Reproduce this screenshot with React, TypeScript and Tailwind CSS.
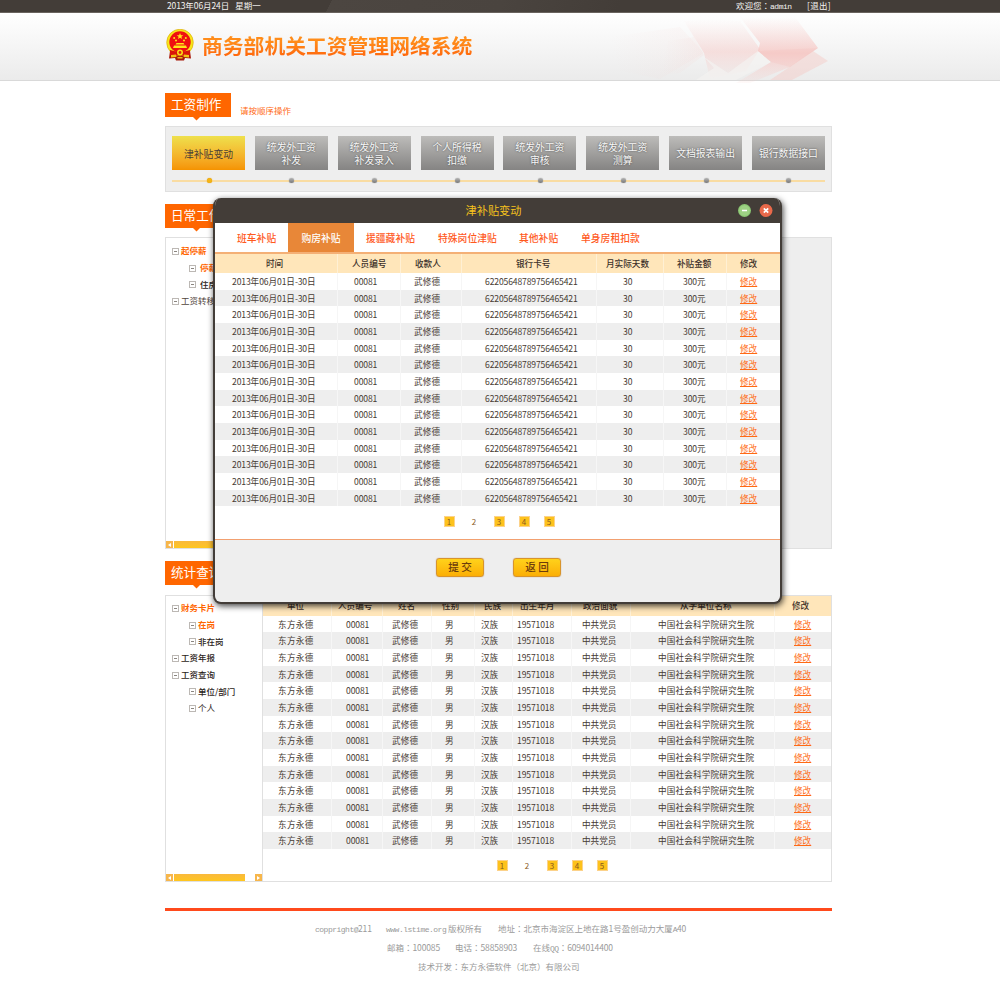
import React from "react";

/* Mixed text: letters get a narrow monospaced face, digits are tightened,
   and the full-width colon is centred in its box. */
function T({ s }: { s: string }) {
  const parts = s.split(/([a-zA-Z.@]+|[\d-]+|：)/);
  return (
    <>
      {parts.map((p, i) => {
        if (i % 2 === 0) return p;
        if (p === "：")
          return (
            <span key={i} className="font-['Noto_Sans_CJK_TC',sans-serif] leading-[0]">
              {p}
            </span>
          );
        return /\d|-/.test(p) ? (
          <span key={i} className="tracking-[-0.140px]">
            {p}
          </span>
        ) : (
          <span key={i} className="font-['Liberation_Mono',monospace] text-[8px] leading-[0] tracking-[-0.500px]">
            {p}
          </span>
        );
      })}
    </>
  );
}

function Badge({ children, className = "" }: { children: React.ReactNode; className?: string }) {
  return (
    <div className={`w-[66px] shrink-0 ${className}`}>
      <div className="h-6 bg-[#ff6600] pl-[6px] text-[12.6px] leading-[21px] text-white">{children}</div>
      <svg className="ml-[28px] block" width="7" height="4" viewBox="0 0 7 4">
        <path d="M0 0H7L3.5 3.6Z" fill="#ff6600" />
      </svg>
    </div>
  );
}

function Emblem() {
  return (
    <svg width="28" height="32" viewBox="0 0 28 32" className="shrink-0">
      <path d="M4 22L3 29.500L9 29L10 31.500H18L19 29L25 29.500L24 22Z" fill="#a81a0c" />
      <circle cx="14" cy="13.500" r="13.300" fill="#f7e61a" stroke="#d8a400" strokeWidth="0.6" />
      <circle cx="14" cy="13" r="10.700" fill="#ef1010" />
      <path d="M14 4L14.900 6.300H17.300L15.400 7.800L16.100 10.100L14 8.700L11.900 10.100L12.600 7.800L10.700 6.300H13.100Z" fill="#ffe61a" />
      <g fill="#ffe61a">
        <circle cx="8.200" cy="9" r="1" />
        <circle cx="10" cy="11.500" r="1" />
        <circle cx="18" cy="11.500" r="1" />
        <circle cx="19.800" cy="9" r="1" />
        <path d="M10.500 14H17.500L18.500 15.500H9.500Z" />
        <path d="M8 16.500H20L21 19H7Z" />
      </g>
      <path d="M4 21Q14 24.500 24 21L24 26Q14 27.500 4 26Z" fill="#d91508" />
      <circle cx="14" cy="23.500" r="3" fill="#f7df18" />
      <circle cx="14" cy="23.500" r="1.400" fill="#e02010" />
      <path d="M5 26L10 25.500L10.500 28L5 28.500ZM23 26L18 25.500L17.500 28L23 28.500Z" fill="#f2c414" />
      <path d="M11.500 28H16.500V29.500H11.500Z" fill="#f2b414" />
    </svg>
  );
}

function HeaderArt() {
  return (
    <svg width="240" height="76" viewBox="0 0 240 76" className="block">
      <defs>
        <linearGradient id="fadeA" x1="0" y1="0" x2="0" y2="1">
          <stop offset="0" stopColor="#f8c4c0" stopOpacity="0" />
          <stop offset="0.55" stopColor="#f8bcb8" stopOpacity="0.65" />
          <stop offset="1" stopColor="#f8c8c4" stopOpacity="0.1" />
        </linearGradient>
        <linearGradient id="fadeB" x1="0" y1="0" x2="1" y2="0">
          <stop offset="0" stopColor="#f6cdc9" stopOpacity="0" />
          <stop offset="1" stopColor="#f6c6c2" stopOpacity="0.35" />
        </linearGradient>
      </defs>
      <path d="M10 24L80 14L104 40L60 66L20 58Z" fill="url(#fadeB)" opacity="0.3" />
      <path d="M68 28L94 24L104 42L80 60L62 62Z" fill="url(#fadeB)" opacity="0.4" />
      <path d="M84 8L112 6L140 8L160 36L146 58L110 66L104 40L94 24Z" fill="url(#fadeA)" opacity="0.6" />
      <path d="M104 44L114 55L96 67H136L171 49L158 38L128 60Z" fill="#f4f2f1" opacity="0.7" />
      <path d="M140 4L195 4L218 35L190 54L150 70H136L171 49L158 38L160 30Z" fill="url(#fadeA)" />
      <path d="M158 38L218 35L190 54L171 49Z" fill="#f6b8b3" opacity="0.2" />
      <path d="M213 38L228 48L192 67H170Z" fill="#f5c5c0" opacity="0.42" />
    </svg>
  );
}

const steps = [
  ["津补贴变动"],
  ["统发外工资", "补发"],
  ["统发外工资", "补发录入"],
  ["个人所得税", "扣缴"],
  ["统发外工资", "审核"],
  ["统发外工资", "测算"],
  ["文档报表输出"],
  ["银行数据接口"],
];

function Steps() {
  return (
    <section className="mt-[5px] h-[66px] border border-[#e0e0e0] bg-[#eeeeee] px-[6px] pt-[9px]">
      <div className="flex justify-between">
        {steps.map((lines, i) => (
          <div
            key={i}
            className={
              "flex h-[34px] w-[73px] flex-col items-center justify-center text-[9.8px] leading-[13px] whitespace-nowrap " +
              (i === 0
                ? "bg-linear-to-b from-[#eee04c] to-[#f59300] pt-[2px] text-[#4c4036]"
                : "bg-linear-to-b from-[#bdbcba] to-[#858483] text-[#f8f8f8] [text-shadow:0_0_2px_#444] " +
                  (lines.length > 1 ? "pt-px" : ""))
            }
          >
            {lines.map((l) => (
              <span key={l}>{l}</span>
            ))}
          </div>
        ))}
      </div>
      <div className="mt-[7px] flex h-[7px] items-center justify-between bg-[linear-gradient(#f9dca2,#f9dca2)] bg-[length:100%_2px] bg-[position:0_3px] bg-no-repeat">
        {steps.map((_, i) => (
          <div key={i} className="flex w-[73px] justify-center pl-px">
            <span
              className={
                "size-[5px] rounded-full " +
                (i === 0
                  ? "bg-[#f4b414] shadow-[0_0_1px_#d08400]"
                  : "bg-linear-to-b from-[#b4b4b4] to-[#787878] shadow-[0_0_1px_#777]")
              }
            />
          </div>
        ))}
      </div>
    </section>
  );
}

function Box() {
  return (
    <svg width="7" height="7" viewBox="0 0 7 7" className="shrink-0">
      <rect x="0.5" y="0.5" width="6" height="6" fill="#fff" stroke="#bcb8b4" />
      <path d="M2 3.500H5" stroke="#8a8580" />
    </svg>
  );
}

function TreeItem({ label, color, sub = false, weight = "font-medium", gap = "gap-[2px]" }: { label: string; color: string; sub?: boolean; weight?: string; gap?: string }) {
  return (
    <div className={`flex h-[16.700px] items-center text-[8.500px] leading-[12px] whitespace-nowrap ${gap} ${sub ? "pl-[23px]" : "pl-[6px]"} ${weight} ${color}`}>
      <Box />
      <span className="pb-[2px]">{label}</span>
    </div>
  );
}

function ScrollBar() {
  return (
    <div className="flex h-[7px] items-stretch">
      <span className="flex w-[7px] items-center justify-center bg-[#f7b64b]">
        <svg width="3" height="4" viewBox="0 0 3 4"><path d="M3 0V4L0 2Z" fill="#fff" /></svg>
      </span>
      <span className="ml-px w-[71px] bg-linear-to-b from-[#f9b93c] to-[#ffc61c]" />
      <span className="ml-auto flex w-[7px] items-center justify-center bg-[#f7b64b]">
        <svg width="3" height="4" viewBox="0 0 3 4"><path d="M0 0V4L3 2Z" fill="#fff" /></svg>
      </span>
    </div>
  );
}

type Col = { h: string; v: string; w: string; hp: string; vp: string };

const staffCols: Col[] = [
  { h: "单位", v: "东方永德", w: "w-[68px]", hp: "pl-[24px]", vp: "pl-[15px] tracking-[0.3px]" },
  { h: "人员编号", v: "00081", w: "w-[51px]", hp: "pl-[6px]", vp: "pl-[14px]" },
  { h: "姓名", v: "武修德", w: "w-[49px]", hp: "pl-[15px]", vp: "pl-[9px] tracking-[0.2px]" },
  { h: "性别", v: "男", w: "w-[43px]", hp: "pl-[10px]", vp: "pl-[13px]" },
  { h: "民族", v: "汉族", w: "w-[38px]", hp: "pl-[9px]", vp: "pl-[6px]" },
  { h: "出生年月", v: "19571018", w: "w-[59px]", hp: "pl-[7px]", vp: "pl-[4px]" },
  { h: "政治面貌", v: "中共党员", w: "w-[59px]", hp: "pl-[11px]", vp: "pl-[10px]" },
  { h: "从学单位名称", v: "中国社会科学院研究生院", w: "w-[144px]", hp: "pl-[49px]", vp: "pl-[27px] tracking-[0.15px]" },
  { h: "修改", v: "", w: "w-[57px]", hp: "pl-[17px]", vp: "pl-[19px]" },
];

const payCols: Col[] = [
  { h: "时间", v: "2013年06月01日-30日", w: "w-[122px]", hp: "pl-[51px]", vp: "pl-[17px]" },
  { h: "人员编号", v: "00081", w: "w-[63px]", hp: "pl-[14px]", vp: "pl-[16px]" },
  { h: "收款人", v: "武修德", w: "w-[61px]", hp: "pl-[14px]", vp: "pl-[13px] tracking-[0.2px]" },
  { h: "银行卡号", v: "62205648789756465421", w: "w-[135px]", hp: "pl-[54px]", vp: "pl-[23px]" },
  { h: "月实际天数", v: "30", w: "w-[67px]", hp: "pl-[9px]", vp: "pl-[26px]" },
  { h: "补贴金额", v: "300元", w: "w-[63px]", hp: "pl-[13px]", vp: "pl-[19px]" },
  { h: "修改", v: "", w: "w-[55px]", hp: "pl-[13px]", vp: "pl-[13px]" },
];

function DataTable({ cols, headClass }: { cols: Col[]; headClass: string }) {
  return (
    <div className="text-[8.600px] whitespace-nowrap text-[#463a32]">
      <div className={`flex overflow-hidden bg-[#ffe6ba] font-medium text-[#3c3029] ${headClass}`}>
        {cols.map((c) => (
          <div key={c.h} className={`shrink-0 border-l border-[#fff0d4] first:border-l-0 ${c.w} ${c.hp}`}>
            {c.h}
          </div>
        ))}
      </div>
      {Array.from({ length: 14 }, (_, i) => (
        <div key={i} className={`flex h-[16.680px] overflow-hidden leading-[16px] ${i % 2 ? "bg-[#eeeeee]" : "bg-white"}`}>
          {cols.map((c) => (
            <div key={c.h} className={`shrink-0 border-l border-[#f6f6f6] first:border-l-0 ${c.w} ${c.vp}`}>
              {c.v ? <T s={c.v} /> : <a className="text-[#ff6a14] underline underline-offset-[1px]">修改</a>}
            </div>
          ))}
        </div>
      ))}
    </div>
  );
}

function Pager({ className }: { className: string }) {
  return (
    <div className={`flex gap-[14px] ${className}`}>
      {[1, 2, 3, 4, 5].map((n) => (
        <span
          key={n}
          className={
            "flex size-[11px] items-center justify-center text-[8px] leading-[9px] text-[#8a5a1c] " +
            (n === 2 ? "" : "border border-[#fcd28a] bg-[#fdc21c]")
          }
        >
          {n}
        </span>
      ))}
    </div>
  );
}

function Modal() {
  const tabs = [
    ["班车补贴", "ml-[22px] w-[51px]"],
    ["购房补贴", "w-[66px] bg-[#e88738] text-white justify-center"],
    ["援疆藏补贴", "ml-[12px] w-[72px]"],
    ["特殊岗位津贴", "w-[81px]"],
    ["其他补贴", "w-[62px]"],
    ["单身房租扣款", ""],
  ];
  return (
    <div className="absolute top-[198px] left-[213px] h-[405.500px] w-[569px] overflow-hidden rounded-[8px] border-2 border-t-0 border-[#433d38] bg-[#eeeeee] shadow-[1px_2px_6px_rgba(0,0,0,0.75)]">
      <div className="flex h-[25px] items-center bg-[#433d38]">
        <div className="flex-1 pl-[250.500px] text-[11.200px] leading-[23px] text-[#f6c21c]">津补贴变动</div>
        <svg width="35" height="13" viewBox="0 0 35 13" className="mr-[7px]">
          <circle cx="6.5" cy="6.5" r="6.500" fill="#8ac772" />
          <circle cx="6.5" cy="6.500" r="5.300" fill="#9ed184" />
          <path d="M4 6.500H9" stroke="#fff" strokeWidth="1.600" />
          <circle cx="28" cy="6.500" r="6.500" fill="#e9694a" />
          <path d="M25.800 4.300L30.200 8.700M30.200 4.300L25.800 8.700" stroke="#fff" strokeWidth="1.700" />
        </svg>
      </div>
      <div className="flex h-[31px] border-b-2 border-[#f4b076] bg-white text-[9.800px] leading-[28px] whitespace-nowrap text-[#ff5a1e]">
        {tabs.map(([l, c]) => (
          <div key={l} className={`flex h-full shrink-0 items-center pt-px font-medium ${c}`}>
            {l}
          </div>
        ))}
      </div>
      <DataTable cols={payCols} headClass="h-[19px] leading-[18px]" />
      <div className="h-[32.500px] bg-white pt-[10px]">
        <Pager className="pl-[228.500px]" />
      </div>
      <div className="h-px bg-[#f2a070]" />
      <div className="flex gap-[29px] pt-[18px] pl-[221px]">
        {["提 交", "返 回"].map((b) => (
          <button
            key={b}
            className="h-[19px] w-[48px] rounded-[3px] border border-[#d8942c] bg-linear-to-b from-[#ffd21a] to-[#fbae05] text-[10.600px] leading-[16px] font-medium whitespace-nowrap text-[#6c3c0c] shadow-[0_0_1px_#b08040]"
          >
            {b}
          </button>
        ))}
      </div>
    </div>
  );
}

export default function App() {
  return (
    <div className="relative h-[993px] w-[1000px] overflow-hidden bg-white font-['Noto_Sans_CJK_SC',sans-serif]">
      <div className="h-[13px] border-b border-[#6a645f] bg-[linear-gradient(115deg,#433d38_33%,#4c4641_33%,#4a443f_50%,#433d38_62%)] text-[8.500px] leading-[11px] whitespace-pre text-[#f4f2f0]">
        <div className="flex pl-[167px]">
          <span className="w-[567px]">
            <T s="2013年06月24日" />
            <span className="ml-[6px]">星期一</span>
          </span>
          <span className="ml-[2px] w-[71px]">
            <T s="欢迎您：admin" />
          </span>
          <span className="tracking-[0.300px]">[退出]</span>
        </div>
      </div>
      <header className="flex h-[68px] border-b border-[#d9d9d9] bg-linear-to-b from-white to-[#ebebeb] pl-[166px]">
        <div className="flex flex-1 gap-[8px] pt-[16px]">
          <Emblem />
          <h1 className="bg-linear-to-b from-[#ff8c1a] from-25% to-[#ff4200] to-75% bg-clip-text text-[20.800px] leading-[32px] font-bold whitespace-nowrap text-transparent">
            商务部机关工资管理网络系统
          </h1>
        </div>
        <div className="mr-[160px] h-[67px]">
          <HeaderArt />
        </div>
      </header>

      <main className="ml-[165px] w-[667px]">
        <div className="flex pt-[12px]">
          <Badge>工资制作</Badge>
          <span className="pt-[11px] pl-[9px] text-[8.500px] leading-[13px] text-[#ff6a14]">请按顺序操作</span>
        </div>
        <Steps />

        <Badge className="mt-[12px]">日常工作</Badge>
        <section className="mt-[5px] flex h-[312px] border border-[#e0e0e0] bg-[#eeeeee]">
          <div className="flex w-[97px] flex-col justify-between overflow-hidden bg-white pt-[5px]">
            <div>
              <TreeItem label="起停薪" color="text-[#ff6600]" weight="font-bold" />
              <TreeItem label="停薪" color="text-[#ff6600]" sub gap="gap-[4px]" weight="font-bold" />
              <TreeItem label="住房" color="text-[#2c2420]" sub gap="gap-[4px]" />
              <TreeItem label="工资转移" color="text-[#50443c]" weight="font-normal" />
            </div>
            <ScrollBar />
          </div>
        </section>

        <Badge className="mt-[12px]">统计查询</Badge>
        <section className="mt-[6px] flex h-[287px] border border-[#e0e0e0] bg-white">
          <div className="flex w-[97px] shrink-0 flex-col justify-between border-r border-[#e0e0e0] pt-[4px]">
            <div>
              <TreeItem label="财务卡片" color="text-[#ff6600]" weight="font-bold" />
              <TreeItem label="在岗" color="text-[#ff6600]" sub weight="font-bold" />
              <TreeItem label="非在岗" color="text-[#2c2420]" sub />
              <TreeItem label="工资年报" color="text-[#2c2420]" />
              <TreeItem label="工资查询" color="text-[#2c2420]" />
              <TreeItem label="单位/部门" color="text-[#2c2420]" sub />
              <TreeItem label="个人" color="text-[#2c2420]" sub weight="font-normal" />
            </div>
            <ScrollBar />
          </div>
          <div className="w-[568px] overflow-hidden">
            <DataTable cols={staffCols} headClass="h-[19.500px] leading-[19px]" />
            <Pager className="pt-[11px] pl-[233.500px]" />
          </div>
        </section>

        <footer className="mt-[26px] border-t-[3px] border-[#ff4a1c] pt-[8px] text-[8.500px] leading-[19.200px] whitespace-nowrap text-[#9a9a9a]">
          <div className="flex h-[19.200px] pl-[150px]">
            <span className="w-[71px]"><T s="coppright@211" /></span>
            <span className="w-[112px]"><T s="www.lstime.org" /> 版权所有</span>
            <span><T s="地址：北京市海淀区上地在路1号盈创动力大厦A40" /></span>
          </div>
          <div className="flex h-[19.200px] pl-[222px]">
            <span className="w-[68px]"><T s="邮箱：100085" /></span>
            <span className="w-[78px]"><T s="电话：58858903" /></span>
            <span><T s="在线QQ：6094014400" /></span>
          </div>
          <div className="h-[19.200px] pl-[253px]"><T s="技术开发：东方永德软件（北京）有限公司" /></div>
        </footer>
      </main>

      <Modal />
    </div>
  );
}
